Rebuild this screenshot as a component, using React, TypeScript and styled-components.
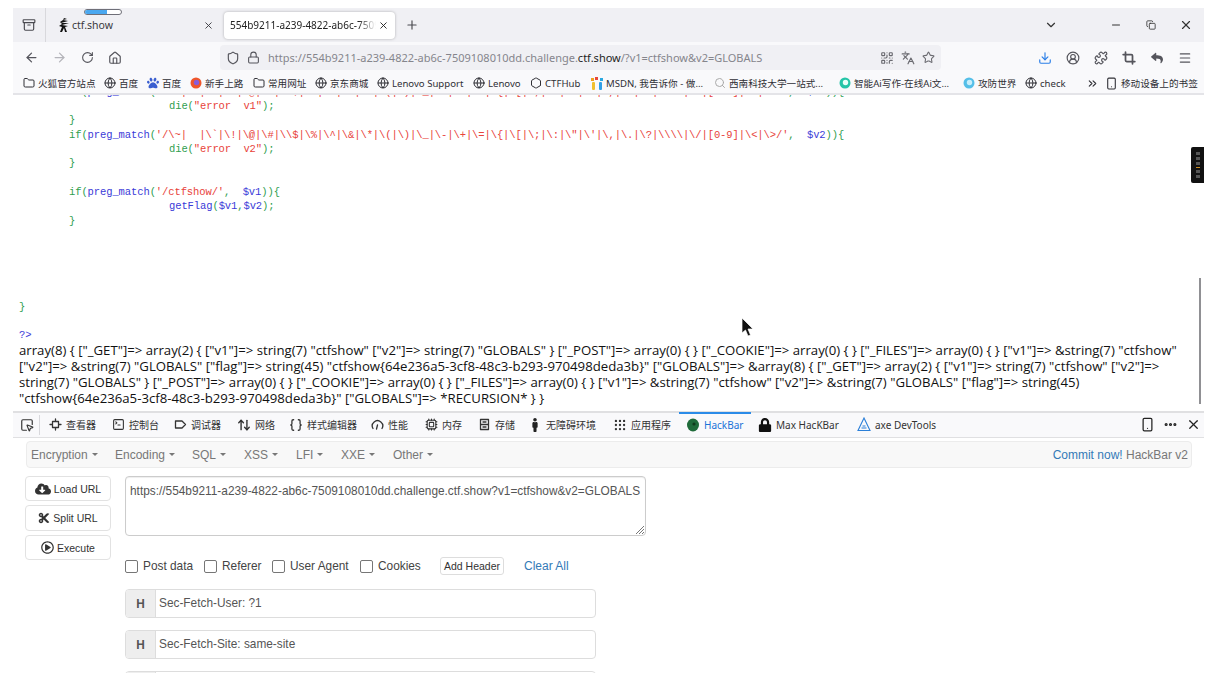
import React from "react";
import styled, { createGlobalStyle } from "styled-components";
import {
  ArrowLeft, ArrowRight, RotateCw, Home, Shield, Lock, QrCode, Languages, Star, Download, CircleUserRound,
  Puzzle, Crop, Menu, X, Plus, ChevronDown, Minus, Copy, Folder, Globe, Search, ChevronsRight, Smartphone,
  SquareMousePointer, SquareTerminal, ArrowUpDown, Braces, Cpu, Grip as GridDots, Ellipsis, Archive,
  Hexagon,
} from "lucide-react";
import { FaCloudDownloadAlt, FaCut, FaLock, FaPaw, FaReply, FaMale, FaRegPlayCircle } from "react-icons/fa";

const Global = createGlobalStyle`
  html, body { margin: 0; padding: 0; background: #fff; height: 100%; overflow: hidden; }
  * { box-sizing: border-box; }
  #root { height: 100%; }
`;

const Screen = styled.div`
  height: 673px; overflow: hidden; padding: 8px 8px 0 13px;
  font-family: "Noto Sans", "Noto Sans CJK SC", sans-serif;
  display: flex; flex-direction: column;
`;
const TabStrip = styled.div`
  height: 34px; flex: none; background: #f0f0f4; display: flex; align-items: center; color: #4a4a50; position: relative;
`;
const ViewBtn = styled.div`
  width: 33px; height: 34px; margin-right: 10px; border-right: 1px solid #d8d8dc; display: flex; align-items: center; justify-content: center;
`;
const IdleTab = styled.div`
  width: 158px; display: flex; align-items: center; font-size: 10.5px; color: #3a3a40; padding: 0 0 0 0; margin-right: 10px;
  svg:first-child { margin-left: 2px; }
`;
const TabLabel = styled.span`
  flex: 1; margin-left: 2px; white-space: nowrap; overflow: hidden;
`;
const ActiveLabel = styled.span`
  flex: 1; white-space: nowrap; overflow: hidden;
  -webkit-mask-image: linear-gradient(90deg, #000 88%, transparent);
  mask-image: linear-gradient(90deg, #000 88%, transparent);
`;
const ActiveTab = styled.div`
  width: 171px; height: 27px; background: #fff; border-radius: 4px; box-shadow: 0 0 3px rgba(0,0,0,.28);
  display: flex; align-items: center; padding: 0 6px; font-size: 10px; color: #222; gap: 2px;
`;
const Progress = styled.div`
  position: absolute; left: 71px; top: 1px; width: 38px; height: 6px; border: 1px solid #6f6f78; border-radius: 3px; background: #fff; overflow: hidden;
  &::before { content: ""; display: block; width: 22px; height: 100%; background: #4aa8f0; }
`;
const NewTab = styled.div`
  margin-left: 10px; display: flex;
`;
const Spacer = styled.div`
  flex: 1;
`;
const WinButtons = styled.div`
  display: flex; align-items: center; color: #333;
`;
const WinButton = styled.div<{ $w: number }>`
  width: ${p => p.$w}px; display: flex; justify-content: center;
`;
const NavBar = styled.div`
  height: 28px; flex: none; background: #f9f9fb; display: flex; align-items: flex-start; padding-top: 3px; color: #55555c;
`;
const NavBtn = styled.div<{ $dim?: boolean }>`
  width: 28px; height: 25px; display: flex; align-items: center; justify-content: center; color: ${p => (p.$dim ? "#b4b4ba" : "#55555c")};
`;
const NavBtns = styled.div`
  display: flex; padding-left: 4px; width: 207px;
`;
const UrlBar = styled.div`
  width: 721px; height: 25px; background: #f0f0f4; border-radius: 4px; display: flex; align-items: center; padding: 0 3px 0 6px; gap: 7px;
`;
const UrlText = styled.div`
  font-family: "Noto Sans", sans-serif; font-size: 11px; color: #85858c; white-space: nowrap; margin-left: 1px; flex: 1;
  b { font-weight: 400; color: #1f1f24; }
`;
const UrlIcons = styled.div`
  display: flex; gap: 7px; padding-right: 3px; color: #6a6a70; align-items: center;
`;
const ToolIcons = styled.div`
  display: flex; margin-left: 90px;
`;
const BookBar = styled.div`
  height: 25px; flex: none; background: #f9f9fb; border-bottom: 2px solid #e4e4e8; display: flex; align-items: center; padding: 3px 0 0 10px;
  font-size: 9.6px; color: #2f2f35; white-space: nowrap;
`;
const Book = styled.div<{ $w: number }>`
  width: ${p => p.$w}px; flex: none; display: flex; align-items: center; gap: 3px;
  svg { flex: none; }
`;
const PageArea = styled.div`
  height: 316px; flex: none; position: relative; overflow: hidden; background: #fff;
`;
const Code = styled.div`
  font-family: "Liberation Mono", "Noto Sans CJK SC", monospace; font-size: 10.5px; letter-spacing: -.1px; line-height: 14.35px; white-space: pre; margin-top: -10.5px; padding-left: 6px;
`;
const G = styled.span` color: #2f9e4f; `;
const B = styled.span` color: #3a3ad8; `;
const R = styled.span` color: #e8423a; `;
const Line = styled.div<{ $i?: number }>`
  height: 14.35px; padding-left: ${p => (p.$i ?? 0) * 50}px;
`;
const Dump = styled.div`
  font-family: "Open Sans", "Noto Sans", sans-serif; font-size: 13.2px; line-height: 16px; color: #111; padding-left: 6px; white-space: nowrap; margin-top: -1px;
`;
const Tool = styled.div`
  position: absolute; right: 0; top: 52px; width: 13px; height: 36px; background: #111; border-radius: 2px 0 0 2px; display: flex; flex-direction: column; align-items: center; justify-content: center; gap: 2px;
  i { display: block; width: 4px; height: 3px; background: #555; }
  i:nth-child(4) { background: #c98a20; height: 1px; }
`;
const Scroll = styled.div`
  position: absolute; right: 3px; top: 183px; width: 2px; height: 126px; background: #909094;
`;
const Cursor = styled.svg`
  position: absolute; left: 728px; top: 222px;
`;
const Dev = styled.div`
  flex: 1; min-height: 0; display: flex; flex-direction: column; border-top: 2px solid #e0e0e2;
`;
const DevTabs = styled.div`
  height: 25px; flex: none; display: flex; align-items: flex-start; background: #f9f9fb; border-bottom: 1px solid #e0e0e2; padding-left: 7px; font-size: 10px; color: #333;
`;
const PickBtn = styled.div`
  width: 20px; height: 20px; margin-top: 2px; border-right: 1px solid #d8d8dc; display: flex; align-items: center; margin-right: 2px;
`;
const DevTab = styled.div<{ $w: number; $active?: boolean }>`
  width: ${p => p.$w}px; flex: none; height: 23px; display: flex; align-items: center; gap: 4px; white-space: nowrap; padding-left: 7px;
  margin-top: -1px;
  border-top: 2px solid ${p => (p.$active ? "#2b8be8" : "transparent")};
  color: ${p => (p.$active ? "#1a73d8" : "#333")};
  svg { flex: none; }
`;
const DevRight = styled.div`
  display: flex; align-items: center; height: 23px; margin-left: auto; gap: 8px; padding-right: 3px; color: #222;
`;
const Panel = styled.div`
  padding: 3px 12px 0 13px; font-family: "Liberation Sans", Arial, sans-serif; color: #555;
`;
const MenuBar = styled.div`
  height: 27px; background: #f8f8f8; border: 1px solid #ececec; border-radius: 4px; display: flex; align-items: center; padding: 0 3px 0 4px; font-size: 12px; color: #777;
`;
const MenuItem = styled.div<{ $w: number }>`
  width: ${p => p.$w}px; flex: none; display: flex; align-items: center; gap: 4px;
  &::after { content: ""; border-top: 3px solid #777; border-left: 3px solid transparent; border-right: 3px solid transparent; }
`;
const Commit = styled.div`
  margin-left: auto; a { color: #337ab7; } white-space: nowrap;
`;
const Body = styled.div`
  display: flex; margin-top: 8px; gap: 14px;
`;
const Side = styled.div`
  width: 86px; margin-left: -1px; flex: none; display: flex; flex-direction: column; gap: 4px;
`;
const SideBtn = styled.div<{ $h: number }>`
  height: ${p => p.$h}px; background: #fff; border: 1px solid #e2e2e2; border-radius: 4px; display: flex; align-items: center; justify-content: center; gap: 3px; font-size: 10.5px; color: #333;
`;
const Main = styled.div`
  flex: 1; min-width: 0;
`;
const UrlArea = styled.div`
  width: 521px; height: 60px; border: 1px solid #ccc; border-radius: 4px; font-size: 11.85px; color: #555; padding: 7px 4px; white-space: nowrap; position: relative; box-shadow: inset 0 1px 1px rgba(0,0,0,.07);
`;
const Grip = styled.svg`
  position: absolute; right: 0; bottom: 0;
`;
const Checks = styled.div`
  display: flex; align-items: center; height: 22px; margin-top: 19px; font-size: 11.85px; color: #444;
`;
const Check = styled.label<{ $w: number }>`
  width: ${p => p.$w}px; flex: none; display: flex; align-items: center; gap: 5px;
  &::before { content: ""; flex: none; width: 11px; height: 11px; border: 1px solid #767676; border-radius: 2px; background: #fff; }
`;
const AddHeader = styled.div`
  width: 64px; height: 18px; border: 1px solid #ddd; border-radius: 3px; font-size: 10.5px; color: #333; display: flex; align-items: center; justify-content: center; margin-left: 5px;
`;
const Clear = styled.a`
  margin-left: 20px; color: #337ab7; font-size: 12px;
`;
const Group = styled.div`
  width: 471px; height: 29px; border: 1px solid #ddd; border-radius: 4px; display: flex; margin-top: 12px; font-size: 11.85px; color: #555; background: #fff; overflow: hidden; flex: none;
  &:first-of-type { margin-top: 11px; }
`;
const Addon = styled.div`
  width: 30px; background: #eee; border-right: 1px solid #ddd; font-weight: 700; display: flex; align-items: center; justify-content: center; color: #555;
`;
const Value = styled.div`
  padding-left: 3px; display: flex; align-items: center; transform: translateY(-1px);
`;

const Favicon = () => (
  <svg width="12" height="16" viewBox="0 0 12 16" fill="#111">
    <path d="M6 1 L9 2 L5 3 L10 4 L3 6 L11 6 L4 8 L10 9 L7 10 L9 15 L7 15 L6 11 L4 15 L2 15 L4 10 L1 9 L4 7 L2 5 L5 3 Z" />
  </svg>
);
const Ring = ({ c, c2 }: { c: string; c2: string }) => (
  <svg width="12" height="12" viewBox="0 0 12 12">
    <circle cx="6" cy="6" r="5.5" fill={c} />
    <circle cx="6.5" cy="5.5" r="2.7" fill={c2} />
  </svg>
);
const Msdn = () => (
  <svg width="12" height="13" viewBox="0 0 12 13">
    <rect x="0" y="1" width="3" height="3" fill="#f0a020" />
    <rect x="4" y="0" width="3" height="3" fill="#e8483a" />
    <rect x="9" y="1" width="3" height="3" fill="#2aa8e0" />
    <rect x="1" y="5" width="3" height="8" rx="1" fill="#f0c030" />
    <rect x="8" y="5" width="3" height="8" rx="1" fill="#30a0e8" />
  </svg>
);
const Hack = () => (
  <svg width="14" height="14" viewBox="0 0 14 14">
    <ellipse cx="7" cy="7" rx="6" ry="6.5" fill="#1f6b3a" />
    <circle cx="8" cy="6" r="1.6" fill="#0f3a1d" />
  </svg>
);
const Axe = () => (
  <svg width="14" height="15" viewBox="0 0 14 15" fill="none" stroke="#2b7fd8" strokeWidth="1.1">
    <path d="M7 1 L13 13.5 H1 Z" />
    <path d="M4.5 11 H9.5 M5.5 9 H8.5" />
  </svg>
);
const DevIcon = ({ d, w = 13 }: { d: string; w?: number }) => (
  <svg width={w} height="13" viewBox="0 0 13 13" fill="none" stroke="#333" strokeWidth="1.3" strokeLinecap="round" strokeLinejoin="round">
    <path d={d} />
  </svg>
);
const inspector = "M3.5 3.5 H9.5 V9.5 H3.5 Z M6.5 1 V3.5 M6.5 9.5 V12 M1 6.5 H3.5 M9.5 6.5 H12";
const debuggerIcon = "M1.5 3 H8 L11.5 6.5 L8 10 H1.5 Z";
const perf = "M2 10.5 A5.2 5.2 0 1 1 11 10.5 M6.5 7 L5.5 11";
const storage = "M2.5 1.5 H10.5 V11.5 H2.5 Z M2.5 6.5 H10.5 M5 4 H8 M5 9 H8";

const bookmarks: [number, React.ReactNode, string][] = [
  [81, <Folder size={12} />, "火狐官方站点"],
  [43, <Globe size={12} />, "百度"],
  [43, <FaPaw size={12} color="#3b5fd0" />, "百度"],
  [63, <Ring c="#f0562a" c2="#8a5cd8" />, "新手上路"],
  [62, <Folder size={12} />, "常用网址"],
  [62, <Globe size={12} />, "京东商城"],
  [96, <Globe size={12} />, "Lenovo Support"],
  [57, <Globe size={12} />, "Lenovo"],
  [61, <Hexagon size={12} />, "CTFHub"],
  [123, <Msdn />, "MSDN, 我告诉你 - 做..."],
  [125, <Search size={12} color="#aaa" />, "西南科技大学一站式..."],
  [124, <Ring c="#25c5a8" c2="#e8fff8" />, "智能Ai写作-在线Ai文..."],
  [62, <Ring c="#55bfe8" c2="#c8eefa" />, "攻防世界"],
  [61, <Globe size={12} />, "check"],
];

const devTabs: [number, React.ReactNode, string][] = [
  [63, <DevIcon d={inspector} />, "查看器"],
  [62, <SquareTerminal size={13} />, "控制台"],
  [63, <DevIcon d={debuggerIcon} />, "调试器"],
  [52, <ArrowUpDown size={14} strokeWidth={2.4} />, "网络"],
  [82, <Braces size={14} strokeWidth={2.2} />, "样式编辑器"],
  [54, <DevIcon d={perf} />, "性能"],
  [53, <Cpu size={13} />, "内存"],
  [50, <DevIcon d={storage} />, "存储"],
  [85, <FaMale size={14} color="#222" />, "无障碍环境"],
  [73, <GridDots size={14} />, "应用程序"],
];

const menus: [string, number][] = [
  ["Encryption", 84], ["Encoding", 77], ["SQL", 52], ["XSS", 52], ["LFI", 45], ["XXE", 52], ["Other", 60],
];

export default function App() {
  return (
    <Screen>
      <Global />
      <TabStrip>
        <ViewBtn><Archive size={14} /></ViewBtn>
        <IdleTab><Favicon /><TabLabel>ctf.show</TabLabel><X size={11} /></IdleTab>
        <ActiveTab><ActiveLabel>554b9211-a239-4822-ab6c-7509108010dd</ActiveLabel><X size={11} /></ActiveTab>
        <NewTab><Plus size={14} /></NewTab>
        <Progress />
        <Spacer />
        <WinButtons>
          <WinButton $w={94}><ChevronDown size={14} /></WinButton>
          <WinButton $w={35}><Minus size={12} /></WinButton>
          <WinButton $w={35}><Copy size={10} /></WinButton>
          <WinButton $w={36}><X size={14} /></WinButton>
        </WinButtons>
      </TabStrip>
      <NavBar>
        <NavBtns>
          <NavBtn><ArrowLeft size={15} /></NavBtn>
          <NavBtn $dim><ArrowRight size={15} /></NavBtn>
          <NavBtn><RotateCw size={13} /></NavBtn>
          <NavBtn><Home size={14} /></NavBtn>
        </NavBtns>
        <UrlBar>
          <Shield size={14} />
          <Lock size={13} />
          <UrlText>https://554b9211-a239-4822-ab6c-7509108010dd.challenge.<b>ctf.show</b>/?v1=ctfshow&amp;v2=GLOBALS</UrlText>
          <UrlIcons>
            <QrCode size={14} />
            <Languages size={14} />
            <Star size={13} />
          </UrlIcons>
        </UrlBar>
        <ToolIcons>
          <NavBtn><Download size={14} color="#2b7fe8" /></NavBtn>
          <NavBtn><CircleUserRound size={14} /></NavBtn>
          <NavBtn><Puzzle size={14} /></NavBtn>
          <NavBtn><Crop size={14} strokeWidth={3} /></NavBtn>
          <NavBtn><FaReply size={12} /></NavBtn>
          <NavBtn><Menu size={14} /></NavBtn>
        </ToolIcons>
      </NavBar>
      <BookBar>
        {bookmarks.map(([w, icon, t], i) => (
          <Book key={i} $w={w}>{icon}<span>{t}</span></Book>
        ))}
        <Book $w={19}><ChevronsRight size={13} /></Book>
        <Book $w={95}><Smartphone size={13} /><span>移动设备上的书签</span></Book>
      </BookBar>
      <PageArea>
        <Code>
          <Line $i={1}><G>if(</G><B>preg_match</B><G>(</G><R>{"'/\\~|  |\\`|\\!|\\@|\\#|\\\\$|\\%|\\^|\\&|\\*|\\(|\\)|\\_|\\-|\\+|\\=|\\{|\\[|\\;|\\:|\\\"|\\'|\\,|\\.|\\?|\\\\\\\\|\\/|[0-9]|\\<|\\>/'"}</R><G>,  </G><B>$v1</B><G>)){"{"}</G></Line>
          <Line $i={3}><G>die(</G><R>"error  v1"</R><G>);</G></Line>
          <Line $i={1}><G>{"}"}</G></Line>
          <Line $i={1}><G>if(</G><B>preg_match</B><G>(</G><R>{"'/\\~|  |\\`|\\!|\\@|\\#|\\\\$|\\%|\\^|\\&|\\*|\\(|\\)|\\_|\\-|\\+|\\=|\\{|\\[|\\;|\\:|\\\"|\\'|\\,|\\.|\\?|\\\\\\\\|\\/|[0-9]|\\<|\\>/'"}</R><G>,  </G><B>$v2</B><G>)){"{"}</G></Line>
          <Line $i={3}><G>die(</G><R>"error  v2"</R><G>);</G></Line>
          <Line $i={1}><G>{"}"}</G></Line>
          <Line />
          <Line $i={1}><G>if(</G><B>preg_match</B><G>(</G><R>'/ctfshow/'</R><G>,  </G><B>$v1</B><G>)){"{"}</G></Line>
          <Line $i={3}><B>getFlag</B><G>(</G><B>$v1</B><G>,</G><B>$v2</B><G>);</G></Line>
          <Line $i={1}><G>{"}"}</G></Line>
          <Line /><Line /><Line /><Line /><Line />
          <Line><G>{"}"}</G></Line>
          <Line />
          <Line><B>?&gt;</B></Line>
        </Code>
        <Dump>
          <div>{'array(8) { ["_GET"]=> array(2) { ["v1"]=> string(7) "ctfshow" ["v2"]=> string(7) "GLOBALS" } ["_POST"]=> array(0) { } ["_COOKIE"]=> array(0) { } ["_FILES"]=> array(0) { } ["v1"]=> &string(7) "ctfshow"'}</div>
          <div>{'["v2"]=> &string(7) "GLOBALS" ["flag"]=> string(45) "ctfshow{64e236a5-3cf8-48c3-b293-970498deda3b}" ["GLOBALS"]=> &array(8) { ["_GET"]=> array(2) { ["v1"]=> string(7) "ctfshow" ["v2"]=>'}</div>
          <div>{'string(7) "GLOBALS" } ["_POST"]=> array(0) { } ["_COOKIE"]=> array(0) { } ["_FILES"]=> array(0) { } ["v1"]=> &string(7) "ctfshow" ["v2"]=> &string(7) "GLOBALS" ["flag"]=> string(45)'}</div>
          <div>{'"ctfshow{64e236a5-3cf8-48c3-b293-970498deda3b}" ["GLOBALS"]=> *RECURSION* } }'}</div>
        </Dump>
        <Tool><i /><i /><i /><i /><i /><i /></Tool>
        <Scroll />
        <Cursor width="13" height="20" viewBox="0 0 13 20"><path d="M1 1 L1 16 L4.5 13 L7 19 L9.5 18 L7 12 L12 12 Z" fill="#111" stroke="#fff" strokeWidth=".7" /></Cursor>
      </PageArea>
      <Dev>
        <DevTabs>
          <PickBtn><SquareMousePointer size={14} /></PickBtn>
          {devTabs.map(([w, icon, t], i) => (
            <DevTab key={i} $w={w}>{icon}<span>{t}</span></DevTab>
          ))}
          <DevTab $w={72} $active><Hack /><span>HackBar</span></DevTab>
          <DevTab $w={99}><FaLock size={14} color="#111" /><span>Max HacKBar</span></DevTab>
          <DevTab $w={90}><Axe /><span>axe DevTools</span></DevTab>
          <DevRight>
            <Smartphone size={15} />
            <Ellipsis size={15} strokeWidth={3} />
            <X size={15} />
          </DevRight>
        </DevTabs>
        <Panel>
          <MenuBar>
            {menus.map(([m, w]) => <MenuItem key={m} $w={w}>{m}</MenuItem>)}
            <Commit><a>Commit now!</a> HackBar v2</Commit>
          </MenuBar>
          <Body>
            <Side>
              <SideBtn $h={25}><FaCloudDownloadAlt size={16} color="#333" />Load URL</SideBtn>
              <SideBtn $h={26}><FaCut size={12} color="#333" />Split URL</SideBtn>
              <SideBtn $h={25}><FaRegPlayCircle size={13} color="#333" />Execute</SideBtn>
            </Side>
            <Main>
              <UrlArea>
                https://554b9211-a239-4822-ab6c-7509108010dd.challenge.ctf.show?v1=ctfshow&amp;v2=GLOBALS
                <Grip width="11" height="11" viewBox="0 0 11 11" stroke="#777"><path d="M10 2 L2 10 M10 5 L5 10 M10 8 L8 10" /></Grip>
              </UrlArea>
              <Checks>
                <Check $w={79}>Post data</Check>
                <Check $w={68}>Referer</Check>
                <Check $w={88}>User Agent</Check>
                <Check $w={75}>Cookies</Check>
                <AddHeader>Add Header</AddHeader>
                <Clear>Clear All</Clear>
              </Checks>
              <Group><Addon>H</Addon><Value>Sec-Fetch-User: ?1</Value></Group>
              <Group><Addon>H</Addon><Value>Sec-Fetch-Site: same-site</Value></Group>
              <Group><Addon>H</Addon><Value /></Group>
            </Main>
          </Body>
        </Panel>
      </Dev>
    </Screen>
  );
}
